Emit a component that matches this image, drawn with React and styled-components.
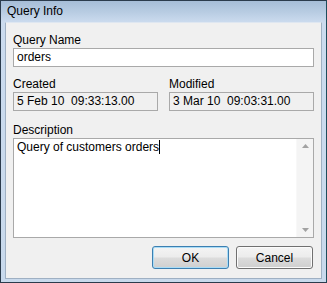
import React from 'react'
import styled, { createGlobalStyle } from 'styled-components'

const GlobalStyle = createGlobalStyle`
  html, body {
    margin: 0;
    padding: 0;
    background: #ffffff;
  }
  body {
    font-family: 'Liberation Sans', Arial, sans-serif;
    font-size: 12px;
    color: #000000;
  }
`

const Window = styled.div`
  width: 327px;
  height: 283px;
  box-sizing: border-box;
  border: 1px solid #2b3b4c;
  border-right-color: #1d4d5c;
  display: flex;
  flex-direction: column;
  background: #c4d6ea;
`

const TitleBar = styled.div`
  height: 21px;
  flex: none;
  display: flex;
  align-items: center;
  padding-left: 6px;
  background: linear-gradient(to bottom, #a6bdd7 0%, #b9cde3 55%, #cbdbee 100%);
  line-height: 15px;
`

const Frame = styled.div`
  flex: 1;
  display: flex;
  padding: 0 4px 3px 4px;
  background: linear-gradient(to bottom, #cbdbee 0%, #c8d9ec 100%);
`

const Body = styled.div`
  flex: 1;
  display: flex;
  flex-direction: column;
  border: 1px solid #9fb0c3;
  border-top-color: #dfe7f1;
  background: #f0f0f0;
  padding: 10px 7px 9px 7px;
`

const Field = styled.div`
  display: flex;
  flex-direction: column;
  margin-top: ${({ $gap }) => $gap || 0}px;
`

const Label = styled.div`
  height: 15px;
  line-height: 15px;
`

const Input = styled.div`
  height: 19px;
  box-sizing: border-box;
  border: 1px solid #a9a9a9;
  background: ${({ $readOnly }) => ($readOnly ? '#f0f0f0' : '#ffffff')};
  padding: 0 3px;
  line-height: 17px;
  white-space: pre;
`

const Row = styled.div`
  display: grid;
  grid-template-columns: 1fr 1fr;
  column-gap: 11px;
  margin-top: 10px;
`

const TextArea = styled.div`
  height: 100px;
  box-sizing: border-box;
  border: 1px solid #a9a9a9;
  background: #ffffff;
  display: flex;
`

const TextContent = styled.div`
  flex: 1;
  padding: 1px 3px;
  line-height: 15px;
`

const Caret = styled.span`
  display: inline-block;
  width: 1px;
  height: 14px;
  background: #000000;
  vertical-align: -3px;
`

const Scrollbar = styled.div`
  width: 16px;
  background: #f4f4f4;
  border-left: 1px solid #f8f8f8;
  display: flex;
  flex-direction: column;
  justify-content: space-between;
  align-items: center;
  padding: 5px 0;
`

const Buttons = styled.div`
  display: flex;
  justify-content: flex-end;
  gap: 7px;
  margin-top: 8px;
  padding-right: 1px;
`

const Button = styled.div`
  width: 77px;
  height: 23px;
  box-sizing: border-box;
  border: 1px solid ${({ $default }) => ($default ? '#3c7fb1' : '#707070')};
  border-radius: 3px;
  display: flex;
  align-items: center;
  justify-content: center;
  background: linear-gradient(
    to bottom,
    #f4f4f4 0%,
    #ececec 48%,
    #dcdcdc 52%,
    #cfcfcf 100%
  );
  box-shadow: inset 0 0 0 1px
    ${({ $default }) => ($default ? '#a9dcf6' : '#fbfbfb')};
`

const Arrow = ({ up }) => (
  <svg width="7" height="4" viewBox="0 0 7 4">
    <path d={up ? 'M0 4 L3.5 0 L7 4 Z' : 'M0 0 L3.5 4 L7 0 Z'} fill="#a2a2a2" />
  </svg>
)

const App = () => (
  <>
    <GlobalStyle />
    <Window>
      <TitleBar>Query Info</TitleBar>
      <Frame>
        <Body>
          <Field>
            <Label>Query Name</Label>
            <Input>orders</Input>
          </Field>

          <Row>
            <Field>
              <Label>Created</Label>
              <Input $readOnly>5 Feb 10  09:33:13.00</Input>
            </Field>
            <Field>
              <Label>Modified</Label>
              <Input $readOnly>3 Mar 10  09:03:31.00</Input>
            </Field>
          </Row>

          <Field $gap={12}>
            <Label>Description</Label>
            <TextArea>
              <TextContent>
                Query of customers orders
                <Caret />
              </TextContent>
              <Scrollbar>
                <Arrow up />
                <Arrow />
              </Scrollbar>
            </TextArea>
          </Field>

          <Buttons>
            <Button $default>OK</Button>
            <Button>Cancel</Button>
          </Buttons>
        </Body>
      </Frame>
    </Window>
  </>
)

export default App
